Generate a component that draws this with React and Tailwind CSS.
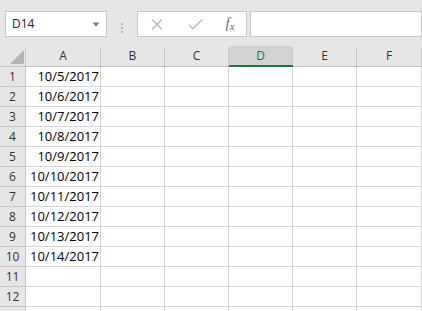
import React from "react";

const cols = ["A", "B", "C", "D", "E", "F"];
const dates = [
  "10/5/2017",
  "10/6/2017",
  "10/7/2017",
  "10/8/2017",
  "10/9/2017",
  "10/10/2017",
  "10/11/2017",
  "10/12/2017",
  "10/13/2017",
  "10/14/2017",
];

function Toolbar() {
  return (
    <div className="flex h-[46px] bg-[#e6e6e6] pt-[11px]">
      <div className="ml-[5px] flex h-[26px] w-[102px] items-center border border-[#c6c6c6] bg-white pl-[6px] pr-[6px]">
        <span className="flex-1 text-[12px] text-[#222]">D14</span>
        <svg width="8" height="5" viewBox="0 0 8 5">
          <polygon points="0.5,0.5 7.5,0.5 4,4.5" fill="#7a7a7a" />
        </svg>
      </div>
      <div className="flex w-[30px] flex-col items-center justify-center gap-[2px] pb-[2px]">
        <span className="h-[2px] w-[2px] bg-[#b5b5b5]" />
        <span className="h-[2px] w-[2px] bg-[#b5b5b5]" />
        <span className="h-[2px] w-[2px] bg-[#b5b5b5]" />
      </div>
      <div className="flex h-[26px] w-[110px] items-center border border-[#c6c6c6] bg-white">
        <div className="flex w-[36px] justify-center pl-[1px]">
          <svg width="12" height="11" viewBox="0 0 12 11">
            <path d="M1 0.5 L11 10.5 M11 0.5 L1 10.5" stroke="#b8b8b8" strokeWidth="1.3" fill="none" />
          </svg>
        </div>
        <div className="flex w-[40px] justify-center pl-[2px]">
          <svg width="15" height="11" viewBox="0 0 15 11">
            <path d="M0.8 5.5 L5 9.8 L14.2 0.6" stroke="#b8b8b8" strokeWidth="1.4" fill="none" />
          </svg>
        </div>
        <div
          className="flex-1 pb-[3px] text-center text-[15px] italic leading-[20px] text-[#6b6b6b]"
          style={{ fontFamily: '"Liberation Serif", serif' }}
        >
          f<sub className="text-[11px]">x</sub>
        </div>
      </div>
      <div className="ml-[3px] h-[26px] w-[172px] border border-[#c6c6c6] bg-white" />
    </div>
  );
}

export default function App() {
  const rows = Array.from({ length: 13 }, (_, i) => i + 1);
  return (
    <div
      className="h-[311px] w-[422px] overflow-hidden bg-[#e6e6e6]"
      style={{ fontFamily: '"Open Sans", sans-serif' }}
    >
      <Toolbar />
      <div className="grid grid-cols-[26px_75px_64px_64px_64px_64px_65px] bg-white">
        <div className="flex h-[21px] border-b border-[#bfbfbf] bg-[#e6e6e6]">
          <svg width="25" height="20" viewBox="0 0 25 20" className="shrink-0">
            <polygon points="24,4 24,18 10,18" fill="#b5b5b5" />
          </svg>
          <span className="mt-[1px] w-px bg-[#c6c6c6]" />
        </div>
        {cols.map((c) => {
          const active = c === "D";
          return (
            <div
              key={c}
              className={
                active
                  ? "flex h-[21px] border-b-2 border-[#217346] bg-[#d2d2d2]"
                  : "flex h-[21px] border-b border-[#bfbfbf] bg-[#e6e6e6]"
              }
            >
              <span
                className={
                  active
                    ? "flex-1 pt-[1px] text-center text-[12px] leading-[18px] text-[#217346]"
                    : "flex-1 pt-[1px] text-center text-[12px] leading-[18px] text-[#333]"
                }
              >
                {c}
              </span>
              <span className="mt-[2px] w-px bg-[#c6c6c6]" />
            </div>
          );
        })}
        {rows.map((r) => (
          <React.Fragment key={r}>
            <div className="h-[20px] border-b border-r border-[#c6c6c6] bg-[#e6e6e6] text-center text-[12px] leading-[19px] text-[#333]">
              {r < 13 ? r : ""}
            </div>
            {cols.map((c) => (
              <div
                key={c}
                className="h-[20px] border-b border-r border-[#d4d4d4] pr-[1px] text-right text-[13px] leading-[19px] text-black"
              >
                {c === "A" && dates[r - 1] ? dates[r - 1] : ""}
              </div>
            ))}
          </React.Fragment>
        ))}
      </div>
    </div>
  );
}
